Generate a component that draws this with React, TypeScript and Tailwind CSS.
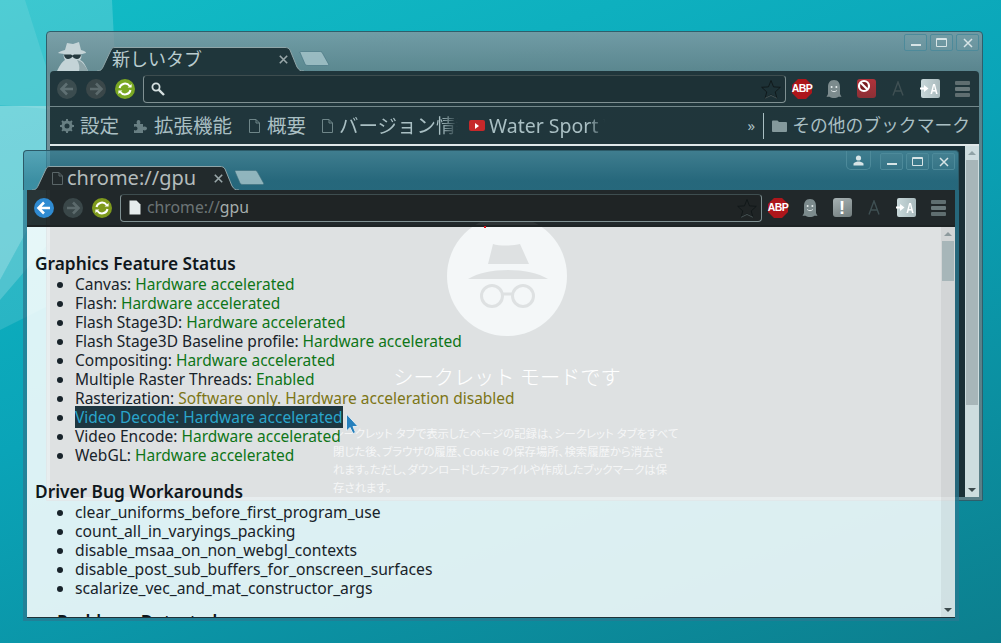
import React from "react";

function Arrow({ dir, bg, fg }: { dir: "l" | "r"; bg: string; fg: string }) {
  return (
    <svg width="20" height="20" viewBox="0 0 20 20" className="shrink-0">
      <circle cx="10" cy="10" r="10" fill={bg} />
      <path
        d={dir === "l" ? "M16 10H5M10 4.5L4.5 10L10 15.5" : "M4 10H15M10 4.5L15.5 10L10 15.5"}
        fill="none"
        stroke={fg}
        strokeWidth="2.6"
      />
    </svg>
  );
}

function Reload({ bg }: { bg: string }) {
  return (
    <svg width="20" height="20" viewBox="0 0 20 20" className="shrink-0">
      <circle cx="10" cy="10" r="10" fill={bg} />
      <path d="M4.5 9A5.6 5.6 0 0 1 14.6 7M15.5 11A5.6 5.6 0 0 1 5.4 13" fill="none" stroke="#fff" strokeWidth="2" />
      <path d="M12.6 8.6H16.6V5zM7.4 11.4H3.4V15z" fill="#fff" />
    </svg>
  );
}

function Star() {
  return (
    <svg width="22" height="22" viewBox="0 0 26 24" className="shrink-0">
      <path d="M13 2L16 9.5L24 10L18 15.5L20 23L13 19L6 23L8 15.5L2 10L10 9.5Z" fill="none" stroke="#0e1516" strokeWidth="1" />
      <path d="M6 23L13 19.6L20 23" fill="none" stroke="#5d6c6e" strokeWidth="0.8" />
    </svg>
  );
}

function Ghost() {
  return (
    <svg width="16" height="20" viewBox="0 0 16 20">
      <path d="M8 1C3.5 1 2 4.5 2 8V15L0.5 18C2 18 3 17.5 4 18C5 18.6 6 19 8 19C10 19 11 18.6 12 18C13 17.5 14 18 15.5 18L14 15V8C14 4.5 12.5 1 8 1Z" fill="#7c8b8d" />
      <circle cx="5.6" cy="8" r="1" fill="#e7eeee" />
      <circle cx="10.4" cy="8" r="1" fill="#e7eeee" />
      <path d="M5.2 11.5C6.5 13 9.5 13 10.8 11.5" stroke="#e7eeee" strokeWidth="0.9" fill="none" />
    </svg>
  );
}

function Abp() {
  return (
    <div className="relative flex h-5 w-5 items-center justify-center">
      <svg width="20" height="20" viewBox="0 0 20 20" className="absolute inset-0">
        <path d="M6 0H14L20 6V14L14 20H6L0 14V6Z" fill="#ad161b" />
      </svg>
      <span className="relative text-[10.5px] font-bold leading-none tracking-[-0.6px] text-white [font-family:'Liberation_Sans',sans-serif]">ABP</span>
    </div>
  );
}

function Menu() {
  return (
    <div className="flex w-[15px] flex-col gap-[2px]">
      <div className="h-[4px] rounded-[1px] bg-[#5f6e70]" />
      <div className="h-[4px] rounded-[1px] bg-[#6a797b]" />
      <div className="h-[4px] rounded-[1px] bg-[#5f6e70]" />
    </div>
  );
}

function Translate() {
  return (
    <div className="flex h-[19px] w-[19px] items-center justify-center rounded-[2px] bg-[linear-gradient(90deg,#c8d8da,#a9babd)]">
      <svg width="9" height="9" viewBox="0 0 9 9" className="shrink-0">
        <path d="M0 3.5H4V1L8.5 4.5L4 8V5.5H0Z" fill="#fff" />
      </svg>
      <span className="text-[14px] font-bold leading-none text-white [font-family:'Liberation_Sans',sans-serif] [transform:scaleX(0.75)]">A</span>
    </div>
  );
}

function Toolbar({ focused }: { focused: boolean }) {
  return (
    <div className="flex h-[35px] shrink-0 items-center pl-[7px] pr-[1px]">
      <div className="flex w-[78px] shrink-0 gap-[9px]">
        <Arrow dir="l" bg={focused ? "#2f8bd2" : "#3b4c4f"} fg={focused ? "#fff" : "#5f7073"} />
        <Arrow dir="r" bg="#3a4749" fg="#5c6a6c" />
        <Reload bg={focused ? "#7f9a1d" : "#7aa823"} />
      </div>
      <div className={"ml-[8px] flex h-[28px] flex-1 items-center rounded-[4px] border border-[#7f9092] border-t-[#3e4d4f] pl-[8px] pr-0 " + (focused ? "bg-[#1f2425]" : "bg-[#1d3136]")}>
        {focused ? (
          <>
            <svg width="12" height="15" viewBox="0 0 12 15" className="shrink-0">
              <path d="M0.5 0.5H7.5L11.5 4.5V14.5H0.5Z" fill="#e6ecec" />
            </svg>
            <span className="ml-[6px] text-[15.8px] leading-none text-[#6c7475]">
              chrome://<span className="text-[#a6aeae]">gpu</span>
            </span>
          </>
        ) : (
          <svg width="14" height="14" viewBox="0 0 14 14" className="ml-[-1px] shrink-0">
            <circle cx="5" cy="5" r="3.6" fill="none" stroke="#d5e0e0" strokeWidth="1.8" />
            <path d="M7.6 7.6L13 13" stroke="#d5e0e0" strokeWidth="2.4" />
          </svg>
        )}
        <div className="ml-auto flex pr-[3px]">
          <Star />
        </div>
      </div>
      {[
        <Abp key="a" />,
        <Ghost key="g" />,
        focused ? (
          <div key="s" className="flex h-[19px] w-[19px] items-center justify-center rounded-[3px] bg-[linear-gradient(160deg,#a7b2b3,#727d7e)]">
            <span className="text-[18px] font-bold leading-none text-white [font-family:'Liberation_Sans',sans-serif]">!</span>
          </div>
        ) : (
          <div key="s" className="flex h-[19px] w-[19px] items-start justify-start rounded-[3px] bg-[linear-gradient(180deg,#b0323a,#8c3036)]">
            <svg width="14" height="14" viewBox="0 0 14 14">
              <circle cx="7" cy="7" r="5" fill="#7a1c20" stroke="#fff" strokeWidth="2.2" />
              <path d="M3.5 3.5L10.5 10.5" stroke="#fff" strokeWidth="2.2" />
            </svg>
          </div>
        ),
        <svg key="f" width="12" height="15" viewBox="0 0 12 15">
          <path d="M1 14.5L6 1L11 14.5M3 10H9" fill="none" stroke="#3f5053" strokeWidth="1.4" />
        </svg>,
        <Translate key="t" />,
        <Menu key="m" />,
      ].map((n, i) => (
        <div key={i} className="flex w-[32px] shrink-0 items-center justify-center">
          {n}
        </div>
      ))}
    </div>
  );
}

function Tab({ focused }: { focused: boolean }) {
  const fill = focused ? "#222a2c" : "#1f363b";
  return (
    <div className="relative flex h-[24px] w-[207px] shrink-0 items-center self-end">
      <svg width="207" height="24" viewBox="0 0 207 24" className="absolute inset-0">
        <path
          d="M0 24C4 24 5 22 6 20L14 3C15 1 16 .5 18 .5H188C190 .5 192 1 193 3L200 20C202 23 203 24 207 24"
          fill={fill}
          stroke="#8fa5a8"
          strokeWidth="1"
        />
      </svg>
      <div className="relative flex w-full items-center pl-[20px] pr-[16px]">
        {focused && (
          <svg width="11" height="13" viewBox="0 0 11 13" className="mr-[4px] shrink-0">
            <path d="M.5 .5H7L10.5 4V12.5H.5Z M7 .5V4H10.5" fill="none" stroke="#5a6668" strokeWidth="1" />
          </svg>
        )}
        <span className={"whitespace-nowrap leading-none " + (focused ? "text-[20px] text-[#b4bcbc]" : "ml-[-5px] text-[18px] text-[#b9cccf]")}>
          {focused ? "chrome://gpu" : "新しいタブ"}
        </span>
        <svg width="9" height="9" viewBox="0 0 9 9" className="ml-auto shrink-0">
          <path d="M.8 .8L8.2 8.2M8.2 .8L.8 8.2" stroke="#9aa8aa" strokeWidth="1.6" />
        </svg>
      </div>
    </div>
  );
}

function NewTab() {
  return (
    <svg width="31" height="15" viewBox="0 0 31 15" className="mb-[5px] ml-[-5px] shrink-0 self-end">
      <path d="M1 1.5C1 .8 1.5 .5 2 .5H21C22 .5 23 1 23.4 2L29.5 13C30 14 29.6 14.5 28.5 14.5H9C7.5 14.5 6.5 14 6 13Z" fill="#a2c2c8" fillOpacity="0.85" stroke="#3f6f7c" strokeWidth="0.6" />
    </svg>
  );
}

function Ctrl({ children }: { children: React.ReactNode }) {
  return (
    <div className="flex h-[17px] w-[23px] items-center justify-center rounded-[2px] border border-[#4d8a9a] bg-[rgba(255,255,255,0.03)]">
      {children}
    </div>
  );
}

function Controls({ focused }: { focused: boolean }) {
  return (
    <div className="ml-auto flex items-start gap-[3px] self-start pt-[2px]">
      {focused && (
        <div className="mr-[6px] mt-[-2px] flex h-[19px] w-[25px] items-center justify-center rounded-b-[5px] border border-t-0 border-[#4d8a9a]">
          <svg width="11" height="11" viewBox="0 0 11 11">
            <circle cx="5.5" cy="3" r="2.6" fill="#d7e4e6" />
            <path d="M.5 10.5V8.5C2 7 4 6.6 5.5 6.6C7 6.6 9 7 10.5 8.5V10.5Z" fill="#d7e4e6" />
          </svg>
        </div>
      )}
      <Ctrl>
        <div className="mt-[5px] h-[2px] w-[10px] bg-[#d7e4e6]" />
      </Ctrl>
      <Ctrl>
        <div className="h-[9px] w-[11px] rounded-[1px] border border-t-2 border-[#d7e4e6]" />
      </Ctrl>
      <Ctrl>
        <svg width="10" height="10" viewBox="0 0 10 10">
          <path d="M1 1L9 9M9 1L1 9" stroke="#d7e4e6" strokeWidth="1.5" />
        </svg>
      </Ctrl>
    </div>
  );
}

function Doc() {
  return (
    <svg width="11" height="14" viewBox="0 0 11 14" className="shrink-0">
      <path d="M.5 .5H7L10.5 4V13.5H.5Z M7 .5V4H10.5" fill="none" stroke="#6f8689" strokeWidth="1" />
    </svg>
  );
}

function Mark({ icon, label, w, gap, fade }: { icon: React.ReactNode; label: string; w: number; gap: number; fade?: boolean }) {
  return (
    <div className="flex shrink-0 items-center overflow-hidden" style={{ width: w }}>
      <div className="flex shrink-0 justify-center" style={{ width: 16, marginRight: gap }}>
        {icon}
      </div>
      <span
        className={
          "flex-1 overflow-hidden whitespace-nowrap text-[19.5px] leading-[24px] text-[#a9bfc3] " +
          (fade ? "[mask-image:linear-gradient(to_right,black_85%,transparent)]" : "")
        }
      >
        {label}
      </span>
    </div>
  );
}

function Bookmarks() {
  return (
    <div className="flex h-[38px] shrink-0 items-center border-t border-[#73888b] pl-[9px] pr-[9px]">
      <Mark
        w={73}
        gap={5}
        label="設定"
        icon={
          <svg width="14" height="14" viewBox="0 0 14 14">
            <circle cx="7" cy="7" r="4" fill="none" stroke="#687f83" strokeWidth="3" />
            <path d="M7 0V14M0 7H14M2 2L12 12M12 2L2 12" stroke="#687f83" strokeWidth="2" strokeDasharray="2.4 9.2" />
          </svg>
        }
      />
      <Mark
        w={114}
        gap={6}
        label="拡張機能"
        icon={
          <svg width="14" height="14" viewBox="0 0 14 14">
            <path d="M1 5H4C3 3 4 1 5.5 1S8 3 7 5H10V8C12 7 14 8 14 9.5S12 12 10 11V14H1V11C3 12 4.5 11 4.5 9.5S3 7 1 8Z" fill="#687f83" />
          </svg>
        }
      />
      <Mark w={73} gap={5} label="概要" icon={<Doc />} />
      <Mark w={139} gap={4} fade label="バージョン情報" icon={<Doc />} />
      <div className="w-[11px] shrink-0" />
      <Mark
        w={136}
        gap={4}
        fade
        label="Water Sport Video"
        icon={
          <div className="flex h-[11px] w-[16px] items-center justify-center rounded-[2px] bg-[#c6282a]">
            <div className="h-0 w-0 border-y-[3px] border-l-[4px] border-y-transparent border-l-white" />
          </div>
        }
      />
      <div className="ml-auto flex items-center">
        <span className="mr-[8px] text-[15px] leading-none text-[#a9bfc3]">»</span>
        <div className="mr-[8px] h-[26px] w-px bg-[#a9bfc3]" />
        <svg width="15" height="12" viewBox="0 0 15 12" className="mr-[5px] shrink-0">
          <path d="M0 1.5C0 1 .5 .5 1 .5H5.5L7 2H14C14.5 2 15 2.5 15 3V11C15 11.5 14.5 12 14 12H1C.5 12 0 11.5 0 11Z" fill="#84999c" />
        </svg>
        <span className="whitespace-nowrap text-[17.8px] leading-none text-[#a9bfc3]">その他のブックマーク</span>
      </div>
    </div>
  );
}

function Incognito() {
  return (
    <svg width="35" height="30" viewBox="0 0 35 30" className="mb-0 ml-[5px] shrink-0 self-end">
      <path d="M10 9L12 2L18 3L24 1L26 9C30 10 31 11 31 12C28 13 26 13 26 13C27 15 26 18 25 19C28 20 30 23 33 30H2C5 24 7 21 10 19C9 17 8 15 9 13C7 13 4 12 3 12C4 11 6 10 10 9Z" fill="#c4d4d7" />
      <path d="M22 19C27 20 30 24 33 30H24C25 26 24 22 22 19Z" fill="#8ea6aa" />
      <path d="M9 13.5H16L17.5 14.5L19 13.5H26C26 16 24 18 22 18C20 18 18.5 17 17.5 15.5C16.5 17 15 18 13 18C11 18 9 16 9 13.5Z" fill="#253a3f" />
    </svg>
  );
}

function Scrollbar({ thumbH, arrow, bg }: { thumbH: number; arrow: string; bg: string }) {
  return (
    <div className={"flex w-[14px] shrink-0 flex-col " + bg}>
      <div className="flex h-[14px] shrink-0 items-center justify-center">
        <div className={"h-0 w-0 border-x-[4px] border-b-[4px] border-x-transparent " + arrow} />
      </div>
      <div className="mx-auto w-[12px] shrink-0 bg-[#a7b6b9]" style={{ height: thumbH }} />
      <div className="mt-auto flex h-[14px] shrink-0 items-center justify-center">
        <div className="h-0 w-0 border-x-[4px] border-t-[4px] border-x-transparent border-t-[#3c4a4d]" />
      </div>
    </div>
  );
}

const features: [string, string, string][] = [
  ["Canvas: ", "Hardware accelerated", "g"],
  ["Flash: ", "Hardware accelerated", "g"],
  ["Flash Stage3D: ", "Hardware accelerated", "g"],
  ["Flash Stage3D Baseline profile: ", "Hardware accelerated", "g"],
  ["Compositing: ", "Hardware accelerated", "g"],
  ["Multiple Raster Threads: ", "Enabled", "g"],
  ["Rasterization: ", "Software only. Hardware acceleration disabled", "y"],
  ["Video Decode: ", "Hardware accelerated", "s"],
  ["Video Encode: ", "Hardware accelerated", "g"],
  ["WebGL: ", "Hardware accelerated", "g"],
];

const bugs = [
  "clear_uniforms_before_first_program_use",
  "count_all_in_varyings_packing",
  "disable_msaa_on_non_webgl_contexts",
  "disable_post_sub_buffers_for_onscreen_surfaces",
  "scalarize_vec_and_mat_constructor_args",
];

const lines = [
  "シークレット タブで表示したページの記録は、シークレット タブをすべて",
  "閉じた後、ブラウザの履歴、Cookie の保存場所、検索履歴から消去さ",
  "れます。ただし、ダウンロードしたファイルや作成したブックマークは保",
  "存されます。",
];

export default function App() {
  return (
    <div className="relative h-[643px] w-[1001px] overflow-hidden bg-[linear-gradient(160deg,#12bcc6_0%,#0aa4b8_45%,#0c7f8e_100%)] [font-family:'Noto_Sans','Noto_Sans_CJK_JP',sans-serif]">
      <svg width="120" height="643" viewBox="0 0 120 643" className="absolute left-0 top-0">
        <polygon points="0,0 112,0 120,160 0,300" fill="#fff" fillOpacity="0.18" />
        <polygon points="0,0 25,0 60,110 0,105" fill="#fff" fillOpacity="0.1" />
        <polygon points="0,106 60,106 60,170 0,280" fill="#fff" fillOpacity="0.3" />
        <polygon points="0,280 60,170 60,300 0,330" fill="#fff" fillOpacity="0.12" />
      </svg>

      {/* back window */}
      <div className="absolute left-[46px] top-[31px] flex h-[470px] w-[937px] flex-col rounded-t-[4px] border border-[#2e5f6b] bg-[linear-gradient(180deg,rgba(140,150,158,0.78)_0px,rgba(112,124,130,0.78)_40px,rgba(112,124,130,0.78)_100%)] px-[3px] pb-[3px]">
        <div className="flex h-[39px] shrink-0">
          <Incognito />
          <div className="ml-[7px] flex items-end">
            <Tab focused={false} />
            <NewTab />
          </div>
          <Controls focused={false} />
        </div>
        <div className="flex flex-1 flex-col overflow-hidden rounded-t-[4px] bg-[rgba(30,52,57,0.97)]">
          <Toolbar focused={false} />
          <Bookmarks />
          <div className="flex min-h-0 flex-1 border-t-2 border-[#dfe8e9]">
            <div className="flex flex-1 flex-col items-center overflow-hidden bg-[#1a3037] pr-[1px] pt-[70px]">
              <svg width="120" height="120" viewBox="0 0 120 120" className="shrink-0">
                <circle cx="60" cy="60" r="60" fill="#b0c6cd" />
                <path d="M41 48L46 28C52 30 66 30 73 28L82 48Z" fill="#1a3037" />
                <path d="M21 63C40 51 82 51 101 63Z" fill="#1a3037" />
                <circle cx="45" cy="80" r="10.5" fill="none" stroke="#1a3037" strokeWidth="3" />
                <circle cx="76" cy="80" r="10.5" fill="none" stroke="#1a3037" strokeWidth="3" />
                <path d="M55 78H66" stroke="#1a3037" strokeWidth="3" />
              </svg>
              <div className="mt-[26px] whitespace-nowrap text-[20.2px] font-light leading-[30px] text-white">シークレット モードです</div>
              <div className="mt-[33px] w-[348px] text-[11.4px] leading-[18px] text-[#ffffff]/70 [font-feature-settings:'palt']">
                {lines.map((l) => (
                  <div key={l} className="whitespace-nowrap">
                    {l}
                  </div>
                ))}
              </div>
            </div>
            <Scrollbar thumbH={245} arrow="border-b-[#8fa3a6]" bg="bg-[rgba(220,235,238,0.92)]" />
          </div>
        </div>
      </div>

      {/* front window */}
      <div className="absolute left-[23px] top-[150px] flex h-[471px] w-[936px] flex-col">
        <div className="flex h-[40px] shrink-0 rounded-t-[4px] border border-b-0 border-[#2b5a68] bg-[linear-gradient(180deg,rgba(75,150,171,0.76)_0px,rgba(42,121,145,0.76)_30px)] px-[3px]">
          <div className="ml-[5px] flex items-end">
            <Tab focused />
            <NewTab />
          </div>
          <Controls focused />
        </div>
        <div className="flex min-h-0 flex-1 flex-col overflow-hidden border-x-[4px] border-b-[3px] border-x-[rgba(42,121,145,0.76)] border-b-[rgba(42,121,145,0.76)] bg-clip-padding">
          <div className="shrink-0 bg-[rgba(34,40,41,0.93)]">
            <Toolbar focused />
          </div>
          <div className="flex min-h-0 flex-1 border-t-2 border-b border-t-[#1d2324] border-b-[#1e3238] bg-[rgba(255,255,255,0.86)]">
            <div className="flex-1 overflow-hidden pl-[8px] pt-[24px] text-[15.5px] leading-[19px] text-[#18232a]">
              <h2 className="mb-[-1px] mt-[1px] text-[17.3px] font-semibold leading-[24px] text-[#0f171c]">Graphics Feature Status</h2>
              <ul className="list-disc pl-[40px]">
                {features.map(([k, v, c]) => (
                  <li key={k}>
                    {c === "s" ? (
                      <span className="bg-[#1d3640] text-[#2aa5cb]">{k + v}</span>
                    ) : (
                      <>
                        {k}
                        <span className={c === "g" ? "text-[#0e7518]" : "text-[#7c7516]"}>{v}</span>
                      </>
                    )}
                  </li>
                ))}
              </ul>
              <h2 className="mb-[-1px] mt-[15px] text-[17.3px] font-semibold leading-[24px] text-[#0f171c]">Driver Bug Workarounds</h2>
              <ul className="list-disc pl-[40px] text-[15.7px]">
                {bugs.map((b) => (
                  <li key={b}>{b}</li>
                ))}
              </ul>
              <h2 className="mt-[12px] pl-[22px] text-[17.3px] font-semibold leading-[24px] text-[#0f171c]">Problems Detected</h2>
            </div>
            <Scrollbar thumbH={40} arrow="border-b-[#8d9a9d]" bg="bg-[rgba(0,0,0,0.05)]" />
          </div>
        </div>
      </div>

      <div className="absolute left-[484px] top-[226px] h-[2px] w-[2px] bg-[#d8141c]" />
      <svg width="14" height="22" viewBox="0 0 14 22" className="absolute left-[345px] top-[413px]">
        <path d="M1.5 1V18L5 14.5L8 20.5L10.5 19.5L8 13.5H13Z" fill="#2680bd" stroke="#dfeaf0" strokeWidth="1" />
      </svg>
    </div>
  );
}
